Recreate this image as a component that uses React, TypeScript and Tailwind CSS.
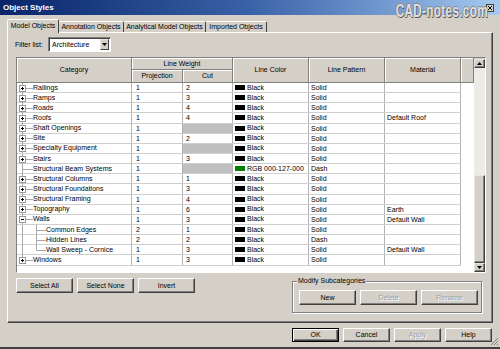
import React from "react";

type Tree = "plus" | "minus" | "leaf" | "child" | "last-child" | "last";

type Row = {
  name: string;
  tree: Tree;
  proj: string;
  cut: string | null;
  green?: boolean;
  pattern: string;
  material?: string;
};

const rows: Row[] = [
  { name: "Railings", tree: "plus", proj: "1", cut: "2", pattern: "Solid" },
  { name: "Ramps", tree: "plus", proj: "1", cut: "3", pattern: "Solid" },
  { name: "Roads", tree: "plus", proj: "1", cut: "4", pattern: "Solid" },
  { name: "Roofs", tree: "plus", proj: "1", cut: "4", pattern: "Solid", material: "Default Roof" },
  { name: "Shaft Openings", tree: "plus", proj: "1", cut: null, pattern: "Solid" },
  { name: "Site", tree: "plus", proj: "1", cut: "2", pattern: "Solid" },
  { name: "Specialty Equipment", tree: "plus", proj: "1", cut: null, pattern: "Solid" },
  { name: "Stairs", tree: "plus", proj: "1", cut: "3", pattern: "Solid" },
  { name: "Structural Beam Systems", tree: "leaf", proj: "1", cut: null, green: true, pattern: "Dash" },
  { name: "Structural Columns", tree: "plus", proj: "1", cut: "1", pattern: "Solid" },
  { name: "Structural Foundations", tree: "plus", proj: "1", cut: "3", pattern: "Solid" },
  { name: "Structural Framing", tree: "plus", proj: "1", cut: "4", pattern: "Solid" },
  { name: "Topography", tree: "plus", proj: "1", cut: "6", pattern: "Solid", material: "Earth" },
  { name: "Walls", tree: "minus", proj: "1", cut: "3", pattern: "Solid", material: "Default Wall" },
  { name: "Common Edges", tree: "child", proj: "2", cut: "1", pattern: "Solid" },
  { name: "Hidden Lines", tree: "child", proj: "2", cut: "2", pattern: "Dash" },
  { name: "Wall Sweep - Cornice", tree: "last-child", proj: "1", cut: "3", pattern: "Solid", material: "Default Wall" },
  { name: "Windows", tree: "last", proj: "1", cut: "3", pattern: "Solid" },
];

function TreeLines({ tree }: { tree: Tree }) {
  const child = tree === "child" || tree === "last-child";
  const box = tree === "plus" || tree === "minus" || tree === "last";
  return (
    <svg width={child ? 29 : 16} height={10} className="shrink-0">
      <line x1={5.5} y1={0} x2={5.5} y2={tree === "last" ? 5.5 : 10} stroke="#a8a8a8" />
      {child ? (
        <>
          <line x1={19.5} y1={0} x2={19.5} y2={tree === "last-child" ? 5.5 : 10} stroke="#a8a8a8" />
          <line x1={19.5} y1={5.5} x2={29} y2={5.5} stroke="#a8a8a8" />
        </>
      ) : (
        <line x1={5.5} y1={5.5} x2={16} y2={5.5} stroke="#a8a8a8" />
      )}
      {box && (
        <>
          <rect x={2.5} y={2.5} width={6} height={6} fill="#fff" stroke="#999" />
          <line x1={4} y1={5.5} x2={7} y2={5.5} stroke="#000" />
          {tree !== "minus" && <line x1={5.5} y1={4} x2={5.5} y2={7} stroke="#000" />}
        </>
      )}
    </svg>
  );
}

function HeadCell({ className, children }: { className: string; children?: React.ReactNode }) {
  return (
    <div
      className={`flex items-center justify-center border-r border-b border-[#808080] shadow-[inset_1px_1px_0_#fff] ${className}`}
    >
      {children}
    </div>
  );
}

function Btn({
  className,
  children,
  disabled,
  def,
}: {
  className: string;
  children: React.ReactNode;
  disabled?: boolean;
  def?: boolean;
}) {
  return (
    <div
      className={`flex items-center justify-center bg-[#d4d0c8] ${
        def
          ? "border border-black shadow-[inset_1px_1px_0_#fff,inset_-1px_-1px_0_#404040,inset_-2px_-2px_0_#808080]"
          : "border border-t-white border-l-white border-r-[#404040] border-b-[#404040] shadow-[inset_-1px_-1px_0_#808080]"
      } ${disabled ? "text-[#a09d96] [text-shadow:1px_1px_0_#fff]" : "text-black"} ${className}`}
    >
      {children}
    </div>
  );
}

function Arrow({ down }: { down?: boolean }) {
  return (
    <svg width={5} height={3}>
      <polygon points={down ? "0,0 5,0 2.5,3" : "0,3 5,3 2.5,0"} fill="#000" />
    </svg>
  );
}

function ScrollBtn({ down }: { down?: boolean }) {
  return (
    <div className="h-[9px] flex items-center justify-center bg-[#d4d0c8] border border-t-[#e8e6e0] border-l-[#e8e6e0] border-r-[#404040] border-b-[#404040] shadow-[inset_-1px_-1px_0_#808080]">
      <Arrow down={down} />
    </div>
  );
}

export default function App() {
  return (
    <div className="relative w-[500px] h-[349px] bg-[#d4d0c8] overflow-hidden border-b-2 border-b-[#404040] font-['Liberation_Sans',Arial,sans-serif] text-[7px] leading-[10px] text-black">
      {/* title bar */}
      <div className="relative h-[15px] flex items-center justify-between pl-[3px] pr-[6px] bg-gradient-to-r from-[#0a246a] via-[#3a62a8] to-[#a6caf0]">
        <span className="text-white font-bold text-[8px]">Object Styles</span>
        <div className="w-[8px] h-[8px] bg-[#d4d0c8] border border-[#404040] flex items-center justify-center">
          <svg width={4} height={4}>
            <line x1={0} y1={0} x2={4} y2={4} stroke="#000" />
            <line x1={4} y1={0} x2={0} y2={4} stroke="#000" />
          </svg>
        </div>
        <span className="absolute right-[12px] top-[1px] origin-right scale-x-[0.62] text-[19px] leading-[19px] font-bold tracking-[0.5px] text-[#e0e0e0] [text-shadow:1px_1px_0_#555,-1px_0_0_#888,0_-1px_0_#888]">
          CAD-notes.com
        </span>
      </div>

      {/* tabs */}
      <div className="flex items-end h-[17px] pl-[7px]">
        <div className="relative z-10 -mb-px w-[52px] h-[14px] bg-[#d4d0c8] border-l border-t border-white border-r border-r-[#404040] rounded-t-[2px] flex items-center justify-center pb-[1px]">
          Model Objects
        </div>
        <div className="w-[65px] h-[11px] border-t border-white border-r border-r-[#404040] rounded-t-[2px] flex items-center justify-center">
          Annotation Objects
        </div>
        <div className="w-[82px] h-[11px] border-t border-white border-r border-r-[#404040] rounded-t-[2px] flex items-center justify-center">
          Analytical Model Objects
        </div>
        <div className="w-[61px] h-[11px] border-t border-white border-r border-r-[#404040] rounded-t-[2px] flex items-center justify-center">
          Imported Objects
        </div>
      </div>

      {/* panel */}
      <div className="ml-[7px] w-[486px] h-[291px] border-l border-t border-white border-r border-b border-r-[#404040] border-b-[#404040] shadow-[inset_-1px_-1px_0_#808080] pl-[8px] flex flex-col">
        <div className="flex items-center h-[15px] mt-[4px]">
          <span className="ml-[-1px] w-[33px]">Filter list:</span>
          <div className="w-[63px] h-[15px] bg-white border border-t-[#808080] border-l-[#808080] border-r-white border-b-white shadow-[inset_1px_1px_0_#404040] flex items-center">
            <span className="flex-1 pl-[3px]">Architecture</span>
            <div className="w-[9px] h-[11px] mr-[1px] flex items-center justify-center bg-[#d4d0c8] border border-t-[#e8e6e0] border-l-[#e8e6e0] border-r-[#404040] border-b-[#404040]">
              <Arrow down />
            </div>
          </div>
        </div>

        {/* table */}
        <div className="mt-[5px] w-[470px] h-[216px] flex border border-t-[#808080] border-l-[#808080] border-r-white border-b-white bg-white">
          <div className="w-[457px] flex flex-col">
            <div className="flex h-[25px] shrink-0 bg-[#d4d0c8]">
              <HeadCell className="w-[115px]">Category</HeadCell>
              <div className="w-[101px] flex flex-col">
                <HeadCell className="h-[12px]">Line Weight</HeadCell>
                <div className="flex flex-1">
                  <HeadCell className="w-[51px]">Projection</HeadCell>
                  <HeadCell className="w-[50px]">Cut</HeadCell>
                </div>
              </div>
              <HeadCell className="w-[76px]">Line Color</HeadCell>
              <HeadCell className="w-[76px]">Line Pattern</HeadCell>
              <HeadCell className="w-[76px]">Material</HeadCell>
              <HeadCell className="w-[13px]" />
            </div>
            <div className="flex-1 overflow-hidden">
              {rows.map((r) => (
                <div key={r.name} className="flex w-[444px] h-[10.15px] border-b border-[#cfcfcf]">
                  <div className="w-[115px] flex items-center border-r border-[#b4b4b4] whitespace-nowrap">
                    <TreeLines tree={r.tree} />
                    <span>{r.name}</span>
                  </div>
                  <div className="w-[51px] pl-[4px] border-r border-[#b4b4b4]">{r.proj}</div>
                  <div className={`w-[50px] pl-[3px] border-r border-[#b4b4b4] ${r.cut === null ? "bg-[#c0c0c0]" : ""}`}>
                    {r.cut}
                  </div>
                  <div className="w-[76px] pl-[2px] flex items-center gap-[2px] border-r border-[#b4b4b4] whitespace-nowrap">
                    <span className={`w-[10px] h-[5px] ${r.green ? "bg-[#008000]" : "bg-black"}`} />
                    <span>{r.green ? "RGB 000-127-000" : "Black"}</span>
                  </div>
                  <div className="w-[76px] pl-[2px] border-r border-[#b4b4b4]">{r.pattern}</div>
                  <div className="w-[76px] pl-[2px] border-r border-[#b4b4b4] whitespace-nowrap">{r.material}</div>
                </div>
              ))}
            </div>
          </div>
          <div className="w-[11px] flex flex-col bg-[#d4d0c8]">
            <div className="h-[1px]" />
            <ScrollBtn />
            <div className="h-[107px] bg-[#ecebe6]" />
            <div className="h-[88px] bg-[#d4d0c8] border border-t-[#e8e6e0] border-l-[#e8e6e0] border-r-[#404040] border-b-[#404040] shadow-[inset_-1px_-1px_0_#808080]" />
            <ScrollBtn down />
          </div>
        </div>

        {/* lower buttons */}
        <div className="mt-[5px] flex items-start">
          <div className="flex gap-[4px]">
            <Btn className="w-[57px] h-[15px]">Select All</Btn>
            <Btn className="w-[57px] h-[15px]">Select None</Btn>
            <Btn className="w-[57px] h-[15px]">Invert</Btn>
          </div>
          <div className="relative ml-auto mr-[10px] mt-[3px] w-[190px] h-[32px] border border-[#808080] shadow-[inset_1px_1px_0_#fff,1px_1px_0_#fff] pl-[6px] pt-[8px] flex gap-[4px]">
            <span className="absolute left-[4px] top-[-6px] px-[1px] bg-[#d4d0c8] leading-[10px]">
              Modify Subcategories
            </span>
            <Btn className="w-[57px] h-[15px]">New</Btn>
            <Btn className="w-[57px] h-[15px]" disabled>
              Delete
            </Btn>
            <Btn className="w-[57px] h-[15px]" disabled>
              Rename
            </Btn>
          </div>
        </div>
      </div>

      {/* dialog buttons */}
      <div className="mt-[5px] flex justify-end gap-[4px] pr-[8px]">
        <Btn className="w-[47px] h-[14px]" def>
          OK
        </Btn>
        <Btn className="w-[47px] h-[14px]">Cancel</Btn>
        <Btn className="w-[47px] h-[14px]" disabled>
          Apply
        </Btn>
        <Btn className="w-[47px] h-[14px]">Help</Btn>
      </div>

      <svg width={9} height={9} className="absolute right-[1px] bottom-[1px]">
        <line x1={8} y1={1} x2={1} y2={8} stroke="#808080" />
        <line x1={8} y1={4} x2={4} y2={8} stroke="#808080" />
        <line x1={8} y1={7} x2={7} y2={8} stroke="#808080" />
      </svg>
    </div>
  );
}
